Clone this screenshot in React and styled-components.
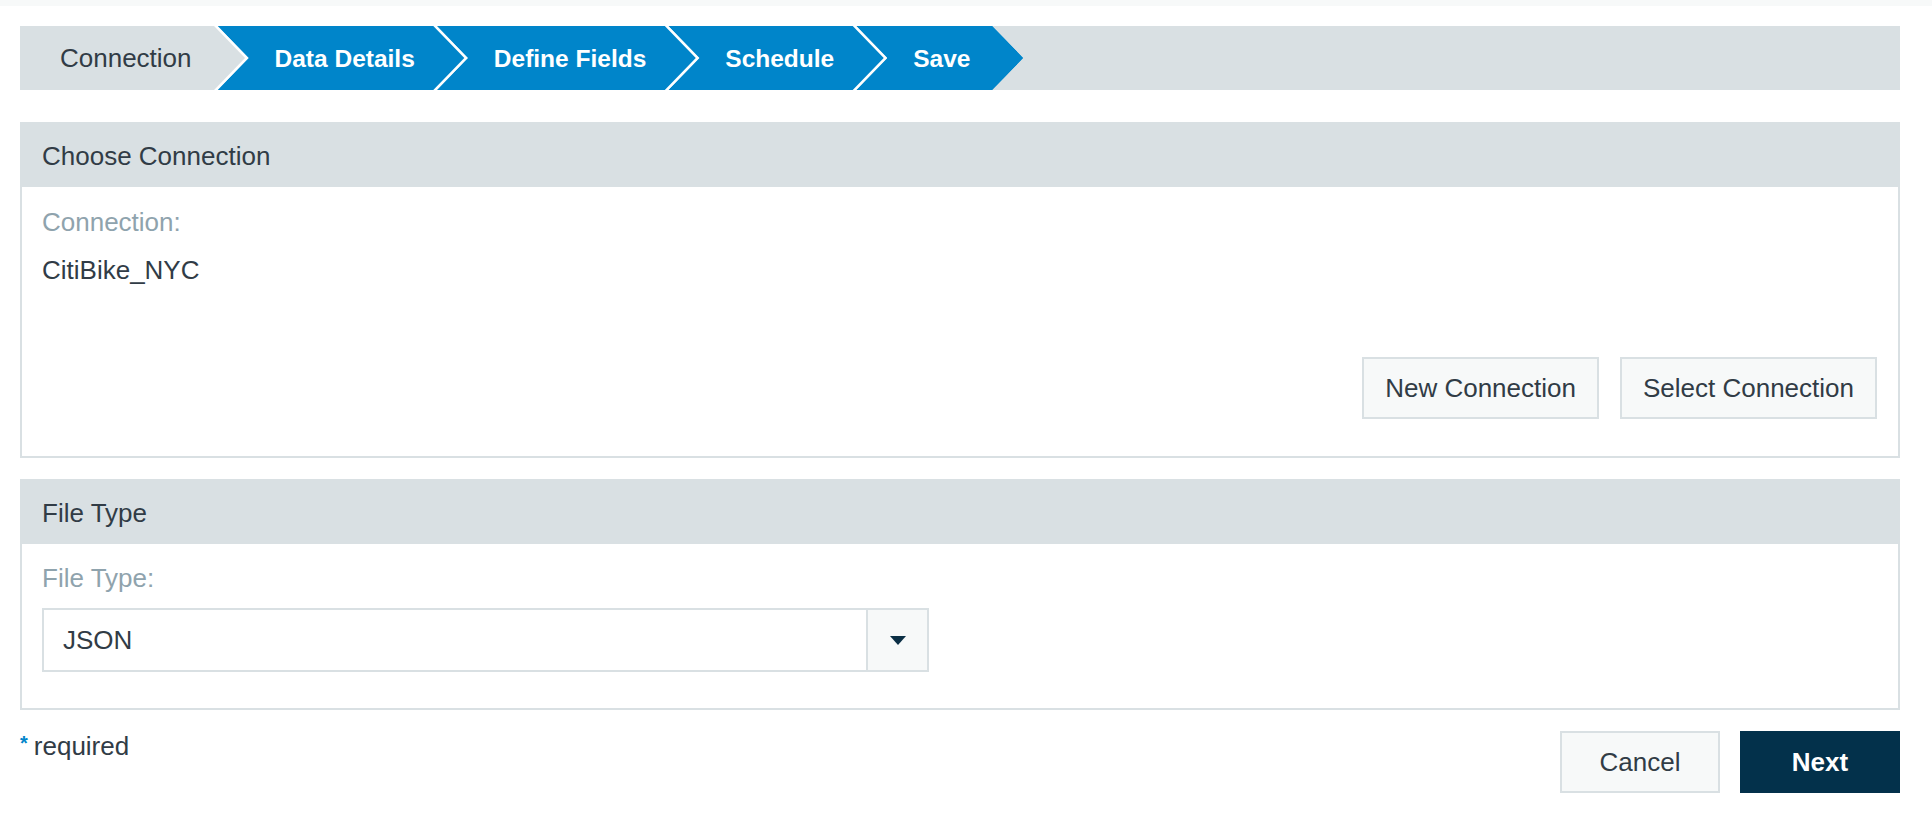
import React from 'react';
import styled, { createGlobalStyle } from 'styled-components';

const GlobalStyle = createGlobalStyle`
  html, body { margin: 0; padding: 0; background: #ffffff; }
  body { font-family: "Liberation Sans", Arial, Helvetica, sans-serif; color: #313c46; }
  * { box-sizing: border-box; }
`;

const ARROW = 31;
const GAP = 3.5;

const TopStrip = styled.div`
  height: 6px;
  background: #f7f9f9;
`;

const Page = styled.main`
  width: 1900px;
  padding: 20px 0 40px 20px;
`;

const StepBar = styled.nav`
  display: flex;
  height: 64px;
  background: #d9e0e3;
`;

const notch = (first) => (first ? '0' : `${ARROW}px`);

const Step = styled.div`
  display: flex;
  height: 100%;
  margin-left: ${(p) => (p.$first ? 0 : -ARROW)}px;
  background: ${(p) => (p.$last ? 'transparent' : '#ffffff')};
  clip-path: polygon(
    0 0,
    calc(100% - ${ARROW}px) 0,
    100% 50%,
    calc(100% - ${ARROW}px) 100%,
    0 100%,
    ${(p) => notch(p.$first)} 50%
  );
`;

const StepFace = styled.div`
  display: flex;
  align-items: center;
  white-space: nowrap;
  padding: 1px ${(p) => (p.$first ? 57 : 53)}px 0 ${(p) => (p.$first ? 40 : 57)}px;
  background: ${(p) => (p.$active ? '#0085ca' : '#d9e0e3')};
  color: ${(p) => (p.$active ? '#ffffff' : '#313c46')};
  font-size: ${(p) => (p.$active ? '24.5px' : '26px')};
  font-weight: ${(p) => (p.$active ? 700 : 400)};
  clip-path: polygon(
    0 0,
    calc(100% - ${(p) => ARROW + (p.$last ? 0 : GAP)}px) 0,
    calc(100% - ${(p) => (p.$last ? 0 : GAP)}px) 50%,
    calc(100% - ${(p) => ARROW + (p.$last ? 0 : GAP)}px) 100%,
    0 100%,
    ${(p) => notch(p.$first)} 50%
  );
`;

const Panel = styled.section`
  border: 2px solid #d9e0e3;
  margin-top: ${(p) => p.$gap}px;
`;

const PanelHeader = styled.header`
  height: 63px;
  display: flex;
  align-items: center;
  padding: 2px 0 0 20px;
  background: #d9e0e3;
  font-size: 26px;
  color: #313c46;
`;

const PanelBody = styled.div`
  padding: ${(p) => p.$pad};
`;

const FieldLabel = styled.div`
  font-size: 26px;
  line-height: 36px;
  color: #8fa3ad;
`;

const FieldValue = styled.div`
  margin-top: 12px;
  font-size: 26px;
  line-height: 36px;
  color: #313c46;
`;

const ButtonRow = styled.div`
  display: flex;
  justify-content: flex-end;
  gap: ${(p) => p.$gap}px;
  margin-top: ${(p) => p.$top || 0}px;
`;

const Button = styled.button`
  height: 62px;
  min-width: ${(p) => p.$width || 0}px;
  padding: 0 21px;
  border: 2px solid ${(p) => (p.$primary ? '#03314b' : '#d9e0e3')};
  background: ${(p) => (p.$primary ? '#03314b' : '#f7f9f9')};
  color: ${(p) => (p.$primary ? '#ffffff' : '#313c46')};
  font-family: inherit;
  font-size: 26px;
  font-weight: ${(p) => (p.$primary ? 700 : 400)};
  cursor: pointer;
`;

const Select = styled.div`
  display: flex;
  width: 887px;
  height: 64px;
  margin-top: 12px;
  border: 2px solid #d9e0e3;
  background: #ffffff;
`;

const SelectValue = styled.div`
  flex: 1;
  display: flex;
  align-items: center;
  padding-left: 19px;
  font-size: 26px;
  color: #313c46;
`;

const SelectToggle = styled.div`
  width: 61px;
  display: flex;
  align-items: center;
  justify-content: center;
  border-left: 2px solid #d9e0e3;
  background: #f7f9f9;
`;

const Caret = styled.span`
  width: 0;
  height: 0;
  border-left: 8px solid transparent;
  border-right: 8px solid transparent;
  border-top: 9px solid #0b2f45;
`;

const Footer = styled.footer`
  display: flex;
  justify-content: space-between;
  align-items: flex-start;
  margin-top: 21px;
`;

const Required = styled.div`
  font-size: 26px;
  line-height: 24px;
  color: #313c46;
`;

const Star = styled.span`
  color: #0085ca;
  font-size: 20px;
  font-weight: 700;
  vertical-align: 5px;
  margin-right: 6px;
`;

const steps = [
  { label: 'Connection', active: false },
  { label: 'Data Details', active: true },
  { label: 'Define Fields', active: true },
  { label: 'Schedule', active: true },
  { label: 'Save', active: true },
];

export default function App() {
  return (
    <>
      <GlobalStyle />
      <TopStrip />
      <Page>
        <StepBar>
          {steps.map((s, i) => (
            <Step key={s.label} $first={i === 0} $last={i === steps.length - 1}>
              <StepFace $first={i === 0} $last={i === steps.length - 1} $active={s.active}>
                {s.label}
              </StepFace>
            </Step>
          ))}
        </StepBar>

        <Panel $gap={32}>
          <PanelHeader>Choose Connection</PanelHeader>
          <PanelBody $pad="17px 21px 37px 20px">
            <FieldLabel>Connection:</FieldLabel>
            <FieldValue>CitiBike_NYC</FieldValue>
            <ButtonRow $gap={21} $top={69}>
              <Button>New Connection</Button>
              <Button>Select Connection</Button>
            </ButtonRow>
          </PanelBody>
        </Panel>

        <Panel $gap={21}>
          <PanelHeader>File Type</PanelHeader>
          <PanelBody $pad="16px 20px 36px 20px">
            <FieldLabel>File Type:</FieldLabel>
            <Select>
              <SelectValue>JSON</SelectValue>
              <SelectToggle>
                <Caret />
              </SelectToggle>
            </Select>
          </PanelBody>
        </Panel>

        <Footer>
          <Required>
            <Star>*</Star>required
          </Required>
          <ButtonRow $gap={20}>
            <Button $width={160}>Cancel</Button>
            <Button $primary $width={160}>Next</Button>
          </ButtonRow>
        </Footer>
      </Page>
    </>
  );
}
